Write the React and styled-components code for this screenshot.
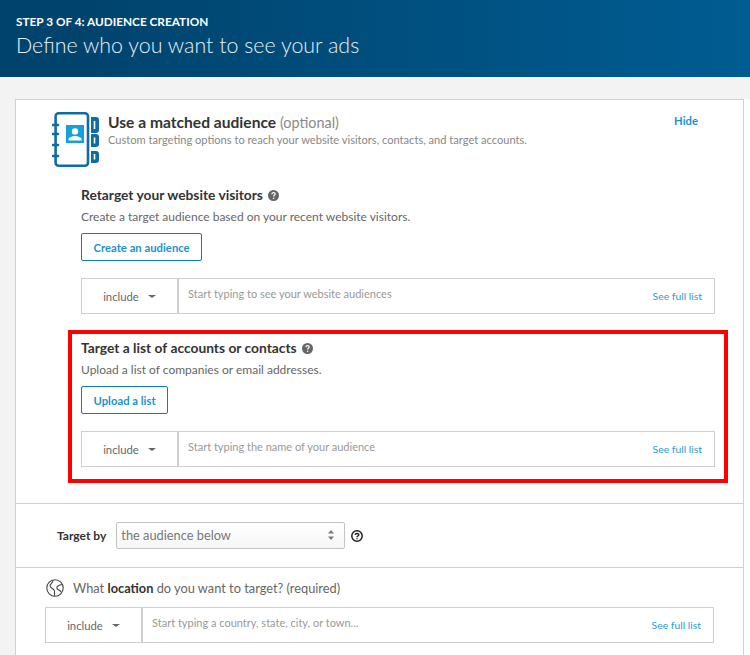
import React from 'react';
import styled, { createGlobalStyle } from 'styled-components';

const GlobalStyle = createGlobalStyle`
    html, body {
        margin: 0;
        padding: 0;
        background: #f3f3f3;
        font-family: Lato, "Noto Sans", sans-serif;
    }
    * { box-sizing: border-box; }
`;

const Page = styled.div`
    width: 750px;
    height: 655px;
    overflow: hidden;
    display: flex;
    flex-direction: column;
`;

const Banner = styled.header`
    height: 77px;
    flex: none;
    padding: 14px 16px 0;
    color: #fff;
    background: linear-gradient(90deg, #00446e 0%, #00446e 12%, #005c92 100%);
`;

const StepLabel = styled.div`
    font-size: 11.8px;
    line-height: 15px;
    font-weight: 700;
`;

const BannerTitle = styled.h1`
    margin: 2px 0 0;
    font-size: 21.4px;
    line-height: 28px;
    font-weight: 300;
    color: #e8f1f6;
`;

const Card = styled.main`
    flex: 1;
    margin: 22px 0 0 15px;
    width: 729px;
    background: #fff;
    border: 1px solid #d0d0d0;
    border-bottom: 0;
    box-shadow: 6px 0 0 #fff;
`;

const MatchedSection = styled.section`
    padding: 0 15px 20px 52px;
    border-bottom: 1px solid #d0d0d0;
`;

const MatchedHead = styled.div`
    display: flex;
    align-items: flex-start;
    gap: 9px;
    padding: 12px 0 0;
    margin-left: -16px;
    height: 86px;
`;

const HeadText = styled.div`
    flex: 1;
`;

const HeadTitle = styled.div`
    font-size: 15.6px;
    line-height: 21px;
    font-weight: 700;
    color: #333;
    span {
        font-size: 14.4px;
        font-weight: 400;
        color: #8a8a8a;
    }
`;

const HeadSub = styled.div`
    font-size: 11.1px;
    line-height: 14px;
    color: #888;
`;

const Link = styled.a`
    color: #2b9bd3;
    font-size: 10.4px;
`;

const HideLink = styled(Link)`
    margin: 1px 30px 0 0;
    line-height: 16px;
    font-size: 11.3px;
    font-weight: 700;
    color: #1c93cf;
`;

const TargetBlock = styled.div`
    width: 660px;
`;

const FramedBlock = styled(TargetBlock)`
    margin-top: 16px;
    border: 4px solid #f00;
    padding: 5px 9px 16px 9px;
    height: 153px;
`;

const PlainBlock = styled(TargetBlock)`
    padding: 0 13px;
`;

const BlockTitle = styled.div`
    display: flex;
    align-items: center;
    gap: 5px;
    font-size: 13.8px;
    line-height: 18px;
    font-weight: 700;
    color: #333;
`;

const BlockText = styled.p`
    margin: 5px 0 9px;
    font-size: 12px;
    line-height: 15px;
    color: #666;
`;

const OutlineButton = styled.button`
    display: block;
    height: 28px;
    padding: 0 11.5px;
    background: #fff;
    border: 1px solid #0b7fb8;
    border-radius: 2px;
    color: #1c93cf;
    font: 700 11.3px Lato, "Noto Sans", sans-serif;
`;

const TokenRow = styled.div`
    display: flex;
    margin-top: ${p => p.$top || 17}px;
    height: 36px;
    border: 1px solid #cfcfcf;
    background: #fff;
`;

const ModeSelect = styled.div`
    width: 97px;
    flex: none;
    display: flex;
    align-items: center;
    justify-content: center;
    gap: 9px;
    padding-top: 1px;
    border-right: 2px solid #cfcfcf;
    font-size: 11.3px;
    color: #666;
`;

const Caret = styled.i`
    width: 0;
    height: 0;
    border-left: 4px solid transparent;
    border-right: 4px solid transparent;
    border-top: 3px solid #666;
`;

const RowHint = styled.div`
    flex: 1;
    padding: 7px 0 0 9px;
    font-size: 11px;
    line-height: 15px;
    color: #999;
`;

const SeeAll = styled(Link)`
    align-self: center;
    margin-right: 12px;
`;

const TargetByRow = styled.div`
    height: 64px;
    display: flex;
    align-items: center;
    padding-left: 41px;
    border-bottom: 1px solid #d0d0d0;
    color: #333;
`;

const TargetByLabel = styled.label`
    font-size: 12px;
    font-weight: 700;
    margin-right: 10px;
`;

const AudienceSelect = styled.div`
    width: 229px;
    height: 27px;
    display: flex;
    align-items: center;
    justify-content: space-between;
    padding: 0 10px 1px 4px;
    background: linear-gradient(#fff, #f6f6f6);
    border: 1px solid #c4c4c4;
    border-radius: 2px;
    font-size: 12.8px;
    color: #777;
`;

const Spinner = styled.svg`
    width: 6px;
    height: 10px;
`;

const HelpDark = styled.svg`
    width: 12px;
    height: 12px;
    margin-left: 6px;
`;

const LocationSection = styled.section`
    padding: 10px 29px 0;
`;

const LocationLabel = styled.div`
    display: flex;
    align-items: center;
    gap: 9px;
    padding-left: 1px;
    font-size: 12.8px;
    line-height: 20px;
    color: #666;
    b { color: #333; }
`;

const QuestionBadge = () => (
    <svg width="11" height="11" viewBox="0 0 11 11">
        <circle cx="5.5" cy="5.5" r="5.5" fill="#666" />
        <path d="M3.8 4.2c.1-1 .8-1.5 1.7-1.5s1.7.6 1.7 1.4c0 1.2-1.6 1.2-1.6 2.4" fill="none" stroke="#fff" strokeWidth="1.2" />
        <circle cx="5.6" cy="8.3" r=".75" fill="#fff" />
    </svg>
);

const BookIcon = () => (
    <svg width="47" height="55" viewBox="0 0 47 55" style={{ flex: 'none' }}>
        <rect x="3.600" y="1.300" width="32.400" height="52.400" rx="3" fill="#fff" stroke="#0f6da3" strokeWidth="2.600" />
        <g fill="#0f6da3">
            <path d="M39 5h5a3 3 0 0 1 3 3v10a3 3 0 0 1-3 3h-5z" />
            <path d="M39 22h5a3 3 0 0 1 3 3v7a3 3 0 0 1-3 3h-5z" />
            <path d="M39 39h5a3 3 0 0 1 3 3v6a3 3 0 0 1-3 3h-5z" />
        </g>
        <path d="M42.500 9v8M42.500 25.500v6M42.500 42v5.500" stroke="#fff" strokeWidth="1.600" />
        <path d="M1 13h5M1 22h5M1 33h5M1 44h5" stroke="#0f6da3" strokeWidth="2.600" strokeLinecap="round" />
        <rect x="14" y="13" width="18" height="18" fill="#15a0dc" />
        <circle cx="23" cy="19.500" r="3.200" fill="#fff" />
        <path d="M16.500 28.500v-1.800c0-1.200 3.800-1.800 5-2.600h3c1.200.8 5 1.400 5 2.600v1.800z" fill="#fff" />
    </svg>
);

const GlobeIcon = () => (
    <svg width="18" height="18" viewBox="0 0 18 18" fill="none" stroke="#444" strokeWidth="1.1">
        <circle cx="9" cy="9" r="8.200" />
        <path d="M7 1C7 4 4 5 4 7c0 2 4 2.500 4.500 5v4.700M16.200 5.500C13 6 10 7.500 11 9.500c.5 1.500 3 1.500 4.200 3.500" />
    </svg>
);

const Row = ({ hint }) => (
    <>
        <ModeSelect>include <Caret /></ModeSelect>
        <RowHint>{hint}</RowHint>
        <SeeAll>See full list</SeeAll>
    </>
);

export default function App() {
    return (
        <Page>
            <GlobalStyle />
            <Banner>
                <StepLabel>STEP 3 OF 4: AUDIENCE CREATION</StepLabel>
                <BannerTitle>Define who you want to see your ads</BannerTitle>
            </Banner>
            <Card>
                <MatchedSection>
                    <MatchedHead>
                        <BookIcon />
                        <HeadText>
                            <HeadTitle>Use a matched audience <span>(optional)</span></HeadTitle>
                            <HeadSub>Custom targeting options to reach your website visitors, contacts, and target accounts.</HeadSub>
                        </HeadText>
                        <HideLink>Hide</HideLink>
                    </MatchedHead>
                    <PlainBlock>
                        <BlockTitle>Retarget your website visitors <QuestionBadge /></BlockTitle>
                        <BlockText>Create a target audience based on your recent website visitors.</BlockText>
                        <OutlineButton>Create an audience</OutlineButton>
                        <TokenRow><Row hint="Start typing to see your website audiences" /></TokenRow>
                    </PlainBlock>
                    <FramedBlock>
                        <BlockTitle>Target a list of accounts or contacts <QuestionBadge /></BlockTitle>
                        <BlockText>Upload a list of companies or email addresses.</BlockText>
                        <OutlineButton>Upload a list</OutlineButton>
                        <TokenRow><Row hint="Start typing the name of your audience" /></TokenRow>
                    </FramedBlock>
                </MatchedSection>
                <TargetByRow>
                    <TargetByLabel>Target by</TargetByLabel>
                    <AudienceSelect>
                        the audience below
                        <Spinner viewBox="0 0 6 10"><path d="M3 0l3 3.500H0zM0 6.500h6L3 10z" fill="#777" /></Spinner>
                    </AudienceSelect>
                    <HelpDark viewBox="0 0 12 12" fill="none" stroke="#222" strokeWidth="1.500">
                        <circle cx="6" cy="6" r="5.200" />
                        <path d="M4.200 4.800c.1-.9.8-1.300 1.800-1.300s1.800.5 1.800 1.300C7.800 6 6 6 6 7.200M6 8.200v1" />
                    </HelpDark>
                </TargetByRow>
                <LocationSection>
                    <LocationLabel><GlobeIcon /><span>What <b>location</b> do you want to target? (required)</span></LocationLabel>
                    <TokenRow $top={9}><Row hint="Start typing a country, state, city, or town..." /></TokenRow>
                </LocationSection>
            </Card>
        </Page>
    );
}
